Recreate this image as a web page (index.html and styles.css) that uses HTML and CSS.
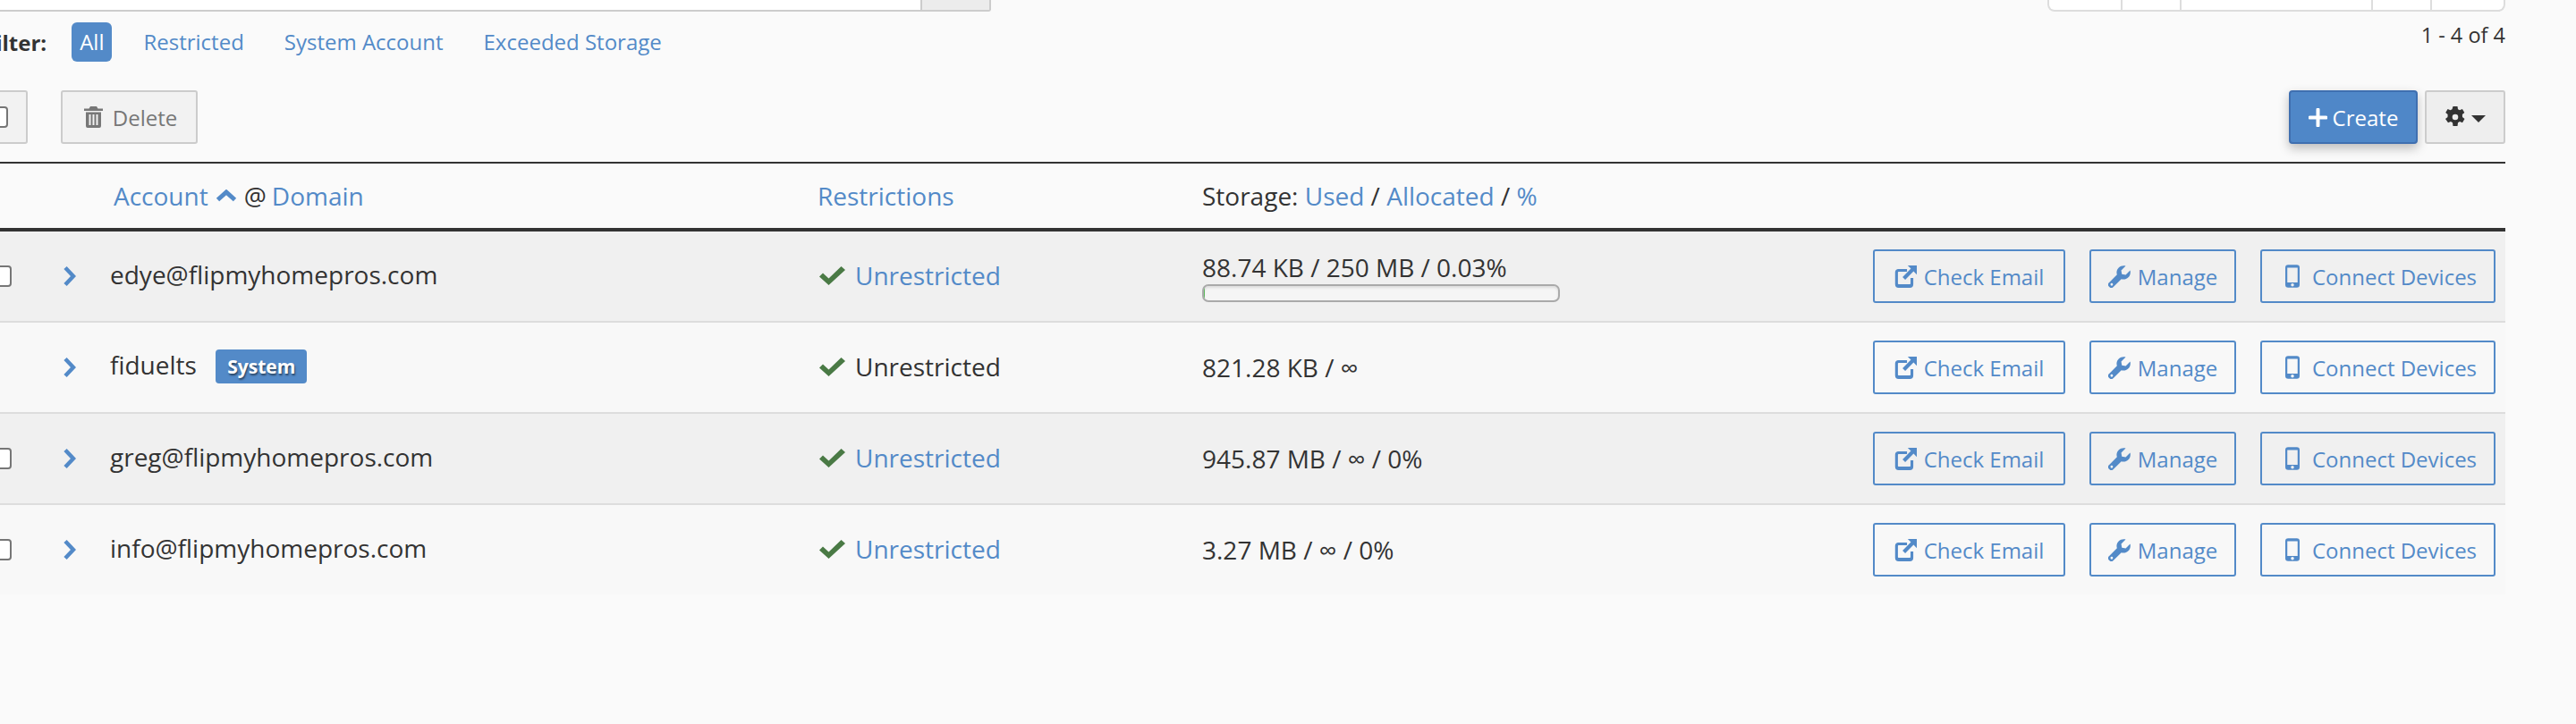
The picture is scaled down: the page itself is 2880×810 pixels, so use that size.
FILE: index.html
```html
<!DOCTYPE html>
<html lang="en">
<head>
<meta charset="utf-8">
<title>Email Accounts</title>
<link rel="stylesheet" href="styles.css">
</head>
<body>
<div class="page">
  <div class="top-row">
    <div class="search"><div class="search-btn"></div></div>
    <div class="pager"><span class="p1"></span><span class="p2"></span><span class="p3"></span><span class="p4"></span><span class="p5"></span></div>
  </div>
  <div class="filter-row">
    <div class="filter">
      <strong class="filter-label">Filter:</strong>
      <a class="pill active">All</a>
      <a class="pill">Restricted</a>
      <a class="pill">System Account</a>
      <a class="pill">Exceeded Storage</a>
    </div>
    <div class="count">1 - 4 of 4</div>
  </div>
  <div class="toolbar">
    <div class="tool-left">
      <button class="btn-default select-all"><span class="cb"></span></button>
      <button class="btn-default delete">
        <svg class="trash" viewBox="0 0 21 24"><path fill-rule="evenodd" d="M7 0h7l1.500 2.500H21v2.500H0V2.500h5.500zM2 6.500h17V22a2 2 0 0 1-2 2H4a2 2 0 0 1-2-2zM5.500 9v12h2V9zM9.500 9v12h2V9zM13.500 9v12h2V9z"/></svg>
        Delete
      </button>
    </div>
    <div class="tool-right">
      <button class="btn-create"><svg class="plus" viewBox="0 0 21 21"><path d="M10.500 1.500v18M1.500 10.500h18"/></svg>Create</button>
      <button class="btn-gear">
        <svg class="gear" viewBox="0 0 22 24"><path fill-rule="evenodd" d="M8.500 0h5l.5 3.200 2 1 2.900-1.200 2.400 4.100-2.400 2 .1 2.900 2.500 2-2.500 4.200-3-1.200-2 1.200-.5 3.800h-5l-.5-3.800-2-1.200-3 1.200L0 14l2.500-2 .1-2.900-2.400-2L2.600 3l2.900 1.200 2-1zM11 8.700a3.300 3.300 0 1 0 0 6.600 3.300 3.300 0 0 0 0-6.600z"/></svg>
        <span class="caret"></span>
      </button>
    </div>
  </div>
  <div class="table">
    <div class="row head">
      <div class="c-check"></div>
      <div class="c-exp"></div>
      <div class="c-acct head-acct"><a>Account</a>
        <svg class="sort" viewBox="0 0 24 14"><path d="M2.500 11.500 12 3l9.500 8.500"/></svg>
        <span>@</span><a class="domain">Domain</a></div>
      <div class="c-rest head-rest"><a>Restrictions</a></div>
      <div class="c-stor">Storage: <a>Used</a> / <a>Allocated</a> / <a>%</a></div>
    </div>

    <div class="row odd">
      <div class="c-check"><span class="cb"></span></div>
      <div class="c-exp"><svg class="chev" viewBox="0 0 15 24"><use href="#i-chev"/></svg></div>
      <div class="c-acct">edye@flipmyhomepros.com</div>
      <div class="c-rest"><svg class="check" viewBox="0 0 29 21"><use href="#i-check"/></svg><a>Unrestricted</a></div>
      <div class="c-stor">
        <div class="stor-text">88.74 KB / 250 MB / 0.03%</div>
        <div class="bar"><div class="bar-fill"></div></div>
      </div>
      <div class="c-act">
        <a class="act email"><svg class="ico" viewBox="0 0 16 16"><use href="#i-ext"/></svg>Check Email</a>
        <a class="act manage"><svg class="ico" viewBox="0 0 16 16"><use href="#i-wr"/></svg>Manage</a>
        <a class="act connect"><svg class="ico ph" viewBox="0 0 10 16"><use href="#i-ph"/></svg>Connect Devices</a>
      </div>
    </div>

    <div class="row">
      <div class="c-check"></div>
      <div class="c-exp"><svg class="chev" viewBox="0 0 15 24"><use href="#i-chev"/></svg></div>
      <div class="c-acct">fiduelts <span class="badge">System</span></div>
      <div class="c-rest"><svg class="check" viewBox="0 0 29 21"><use href="#i-check"/></svg><span>Unrestricted</span></div>
      <div class="c-stor">821.28 KB / ∞</div>
      <div class="c-act">
        <a class="act email"><svg class="ico" viewBox="0 0 16 16"><use href="#i-ext"/></svg>Check Email</a>
        <a class="act manage"><svg class="ico" viewBox="0 0 16 16"><use href="#i-wr"/></svg>Manage</a>
        <a class="act connect"><svg class="ico ph" viewBox="0 0 10 16"><use href="#i-ph"/></svg>Connect Devices</a>
      </div>
    </div>

    <div class="row odd">
      <div class="c-check"><span class="cb"></span></div>
      <div class="c-exp"><svg class="chev" viewBox="0 0 15 24"><use href="#i-chev"/></svg></div>
      <div class="c-acct">greg@flipmyhomepros.com</div>
      <div class="c-rest"><svg class="check" viewBox="0 0 29 21"><use href="#i-check"/></svg><a>Unrestricted</a></div>
      <div class="c-stor">945.87 MB / ∞ / 0%</div>
      <div class="c-act">
        <a class="act email"><svg class="ico" viewBox="0 0 16 16"><use href="#i-ext"/></svg>Check Email</a>
        <a class="act manage"><svg class="ico" viewBox="0 0 16 16"><use href="#i-wr"/></svg>Manage</a>
        <a class="act connect"><svg class="ico ph" viewBox="0 0 10 16"><use href="#i-ph"/></svg>Connect Devices</a>
      </div>
    </div>

    <div class="row">
      <div class="c-check"><span class="cb"></span></div>
      <div class="c-exp"><svg class="chev" viewBox="0 0 15 24"><use href="#i-chev"/></svg></div>
      <div class="c-acct">info@flipmyhomepros.com</div>
      <div class="c-rest"><svg class="check" viewBox="0 0 29 21"><use href="#i-check"/></svg><a>Unrestricted</a></div>
      <div class="c-stor">3.27 MB / ∞ / 0%</div>
      <div class="c-act">
        <a class="act email"><svg class="ico" viewBox="0 0 16 16"><use href="#i-ext"/></svg>Check Email</a>
        <a class="act manage"><svg class="ico" viewBox="0 0 16 16"><use href="#i-wr"/></svg>Manage</a>
        <a class="act connect"><svg class="ico ph" viewBox="0 0 10 16"><use href="#i-ph"/></svg>Connect Devices</a>
      </div>
    </div>
  </div>
</div>
<svg class="defs" width="0" height="0">
  <defs>
    <g id="i-chev"><path d="M3 2.500 12 12l-9 9.500" fill="none" stroke-width="4.500"/></g>
    <g id="i-check"><path d="M0 11.500 4 7.500l6.500 6L24.500 0 29 4 10.500 21z"/></g>
    <g id="i-ext"><path fill-rule="evenodd" d="M2.500 2.500H9v2H3a.5.5 0 0 0-.5.5v8a.5.5 0 0 0 .5.5h8a.5.5 0 0 0 .5-.5V9h2v4.500A2.500 2.500 0 0 1 11 16H3a2.500 2.500 0 0 1-2.500-2.500V5a2.500 2.500 0 0 1 2-2.500z"/><path d="M9.500 0H16v6.500l-2.300-2.300-6 6-1.900-1.900 6-6z"/></g>
    <g id="i-wr"><path fill-rule="evenodd" d="M15.700 3.500c.5 1.800 0 3.700-1.300 5-1.400 1.400-3.300 1.800-5 1.200L3.700 15.400a2 2 0 0 1-2.900 0l-.2-.2a2 2 0 0 1 0-2.900l5.700-5.700c-.6-1.700-.2-3.600 1.200-5C8.800.3 10.700-.2 12.500.3L9.300 3.500l.5 2.700 2.700.5zM2.500 12.700a.9.9 0 1 0 0 1.800.9.9 0 0 0 0-1.800z"/></g>
    <g id="i-ph"><path fill-rule="evenodd" d="M2 0h6a2 2 0 0 1 2 2v12a2 2 0 0 1-2 2H2a2 2 0 0 1-2-2V2a2 2 0 0 1 2-2zM1.400 2v10.400h7.200V2zM5 13a1.100 1.100 0 1 0 0 2.200A1.100 1.100 0 0 0 5 13z"/></g>
  </defs>
</svg>
</body>
</html>
```

FILE: styles.css
```css
* { box-sizing: border-box; }
html, body { margin: 0; padding: 0; }
body {
  width: 2880px;
  height: 810px;
  overflow: hidden;
  background: #fafafa;
  font-family: "Open Sans", sans-serif;
  font-size: 28px;
  color: #333;
}
a { color: #538ac8; text-decoration: none; }
.defs { position: absolute; }

.page { width: 2809px; margin-left: -8px; }

.top-row { height: 19px; display: flex; justify-content: space-between; align-items: flex-start; }
.search { width: 1116px; height: 13px; background: #fff; border-bottom: 2px solid #ccc; border-radius: 0 0 3px 0; }
.search-btn { width: 79px; height: 11px; margin-left: auto; background: #ececec; border-left: 2px solid #ccc; border-right: 2px solid #ccc; }
.pager { width: 512px; height: 13px; display: flex; background: #fff; border: 2px solid #ddd; border-top: 0; border-radius: 0 0 8px 8px; }
.pager span { border-right: 2px solid #ddd; }
.p1 { width: 82px; }
.p2 { width: 66px; }
.p3 { width: 214px; }
.p4 { width: 66px; }
.p5 { flex: 1; border-right: 0 !important; }

.filter-row { height: 82px; display: flex; justify-content: space-between; align-items: flex-start; }
.filter { display: flex; align-items: center; height: 44px; margin: 6px 0 0 -10px; font-size: 24px; }
.filter-label { font-weight: 700; color: #333; margin-right: 28px; }
.pill { padding: 0 9px; line-height: 44px; border-radius: 6px; margin-right: 27px; }
.pill.active { background: #538ac8; color: #fff; margin-right: 26px; }
.count { font-size: 23.5px; margin-top: 4px; }

.toolbar { display: flex; justify-content: space-between; height: 80px; align-items: flex-start; }
.tool-left { display: flex; gap: 37px; }
.btn-default {
  height: 60px;
  border: 2px solid #ccc;
  border-radius: 3px;
  background: #f2f2f2;
  color: #777;
  font: 24px "Open Sans", sans-serif;
  display: flex;
  align-items: center;
  padding: 0;
}
.select-all { width: 39px; justify-content: flex-end; padding-right: 20px; }
.delete { width: 153px; gap: 11px; justify-content: center; padding-left: 3px; }
.trash { width: 21px; height: 24px; fill: #777; }
.tool-right { display: flex; gap: 8px; }
.btn-create {
  width: 144px;
  height: 60px;
  background: #4f87c8;
  border: 2px solid #3f6fb0;
  border-radius: 4px;
  color: #fff;
  font: 24px "Open Sans", sans-serif;
  box-shadow: 0 5px 12px rgba(0,0,0,.25);
  display: flex;
  align-items: center;
  justify-content: center;
  gap: 6px;
  padding: 0;
}
.plus { width: 21px; height: 21px; stroke: #fff; stroke-width: 4; stroke-linecap: round; fill: none; }
.btn-gear {
  width: 90px;
  height: 60px;
  background: #eee;
  border: 2px solid #ccc;
  border-radius: 3px;
  display: flex;
  align-items: center;
  justify-content: center;
  gap: 7px;
  padding: 0;
}
.gear { width: 22px; height: 24px; fill: #333; }
.caret { width: 0; height: 0; border-left: 8px solid transparent; border-right: 8px solid transparent; border-top: 8px solid #333; margin-top: 3px; }

.row {
  display: flex;
  align-items: center;
  height: 102px;
  border-bottom: 2px solid #ddd;
  padding-right: 11px;
  background: #f8f8f8;
}
.row:last-child { border-bottom: 0; height: 100px; }
.row.odd { background: #f0f0f0; }
.row.head {
  height: 78px;
  background: #fafafa;
  border-top: 2px solid #333;
  border-bottom: 4px solid #333;
  padding-right: 0;
}

.c-check { width: 60px; flex: none; display: flex; justify-content: flex-end; padding-right: 39px; }
.cb { display: block; width: 21px; height: 24px; flex: none; background: #fff; border: 2px solid #767676; border-radius: 4px; }
.c-exp { width: 71px; flex: none; display: flex; align-items: center; padding-left: 18px; }
.chev { width: 15px; height: 24px; fill: none; stroke: #538ac8; }
.c-acct { width: 791px; flex: none; padding-bottom: 4px; }
.head-acct { padding: 0 0 0 4px; display: flex; align-items: center; gap: 8px; }
.domain { margin-left: -2px; }
.sort { width: 24px; height: 14px; fill: none; stroke: #538ac8; stroke-width: 5; }
.c-rest { width: 430px; flex: none; display: flex; align-items: center; gap: 11px; padding: 0 0 2px 2px; }
.head-rest { padding: 0; }
.check { width: 29px; height: 21px; fill: #4a7a45; flex: none; }
.c-stor { width: 750px; flex: none; }
.stor-text { line-height: 36px; }
.bar { width: 400px; height: 20px; margin-top: 1px; background: #f5f5f5; border: 2px solid #aaa; border-radius: 7px; overflow: hidden; box-shadow: inset 0 2px 3px rgba(0,0,0,.1); }
.bar-fill { width: 1px; height: 100%; background: #5cb85c; }
.badge {
  display: inline-block;
  margin-left: 14px;
  padding: 0 13px;
  height: 38px;
  line-height: 38px;
  vertical-align: 1px;
  background: #538ac8;
  color: #fff;
  font-size: 21px;
  font-weight: 700;
  border-radius: 4px;
  text-shadow: 1px 2px 2px rgba(0,0,0,.5);
}
.c-act { margin-left: auto; display: flex; gap: 27px; flex: none; }
.act {
  height: 60px;
  border: 2px solid #538ac8;
  border-radius: 3px;
  display: flex;
  align-items: center;
  justify-content: center;
  gap: 8px;
  font-size: 24px;
}
.email { width: 215px; }
.manage { width: 164px; }
.connect { width: 263px; }
.ico { width: 25px; height: 25px; fill: #538ac8; flex: none; }
.ico.ph { width: 16px; height: 26px; margin: 0 6px 0 7px; }
```
